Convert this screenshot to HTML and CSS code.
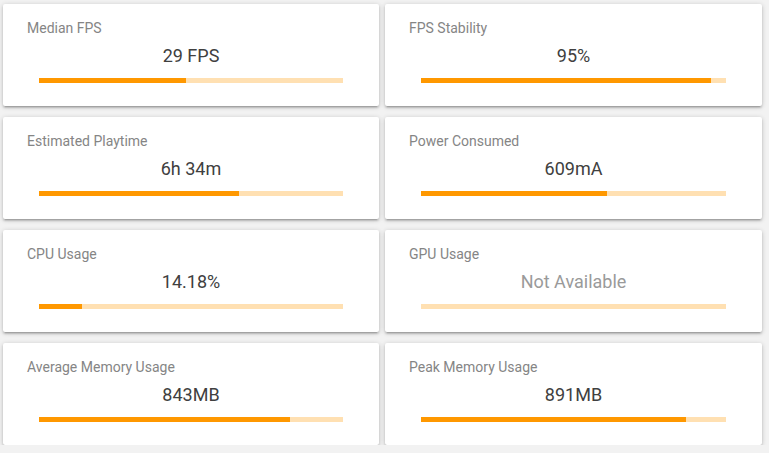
FILE: index.html
```html
<!DOCTYPE html>
<html>
<head>
<meta charset="utf-8">
<link rel="stylesheet" href="styles.css">
</head>
<body>
<div class="grid">
  <div class="card"><div class="label">Median FPS</div><div class="value">29 FPS</div><div class="bar"><div class="fill" style="width:48.4%"></div></div></div>
  <div class="card"><div class="label">FPS Stability</div><div class="value">95%</div><div class="bar"><div class="fill" style="width:95.2%"></div></div></div>
  <div class="card"><div class="label">Estimated Playtime</div><div class="value">6h 34m</div><div class="bar"><div class="fill" style="width:65.8%"></div></div></div>
  <div class="card"><div class="label">Power Consumed</div><div class="value">609mA</div><div class="bar"><div class="fill" style="width:61%"></div></div></div>
  <div class="card"><div class="label">CPU Usage</div><div class="value">14.18%</div><div class="bar"><div class="fill" style="width:14.18%"></div></div></div>
  <div class="card"><div class="label">GPU Usage</div><div class="value na">Not Available</div><div class="bar"><div class="fill" style="width:0%"></div></div></div>
  <div class="card"><div class="label">Average Memory Usage</div><div class="value">843MB</div><div class="bar"><div class="fill" style="width:82.6%"></div></div></div>
  <div class="card"><div class="label">Peak Memory Usage</div><div class="value">891MB</div><div class="bar"><div class="fill" style="width:86.9%"></div></div></div>
</div>
</body>
</html>
```
FILE: styles.css
```css
html, body {
  margin: 0;
  padding: 0;
  background: #f2f2f2;
  font-family: Roboto, "Liberation Sans", sans-serif;
}
.grid {
  display: grid;
  grid-template-columns: 376px 377px;
  grid-auto-rows: 102px;
  column-gap: 6px;
  row-gap: 11px;
  padding: 4px 0 0 3px;
}
.card {
  background: #fff;
  border-radius: 2px;
  box-shadow: 0 2px 2px 0 rgba(0,0,0,.14), 0 3px 1px -2px rgba(0,0,0,.12), 0 1px 5px 0 rgba(0,0,0,.2);
  padding: 16px 24px 0 24px;
  box-sizing: border-box;
}
.label {
  font-size: 14px;
  line-height: 16px;
  color: #858585;
}
.value {
  margin-top: 9px;
  font-size: 18px;
  line-height: 21px;
  color: #404040;
  text-align: center;
}
.value.na {
  color: #9a9a9a;
}
.bar {
  margin: 12px 12px 0 12px;
  height: 5px;
  background: #ffe0b2;
}
.fill {
  height: 100%;
  background: #ff9800;
}
```
